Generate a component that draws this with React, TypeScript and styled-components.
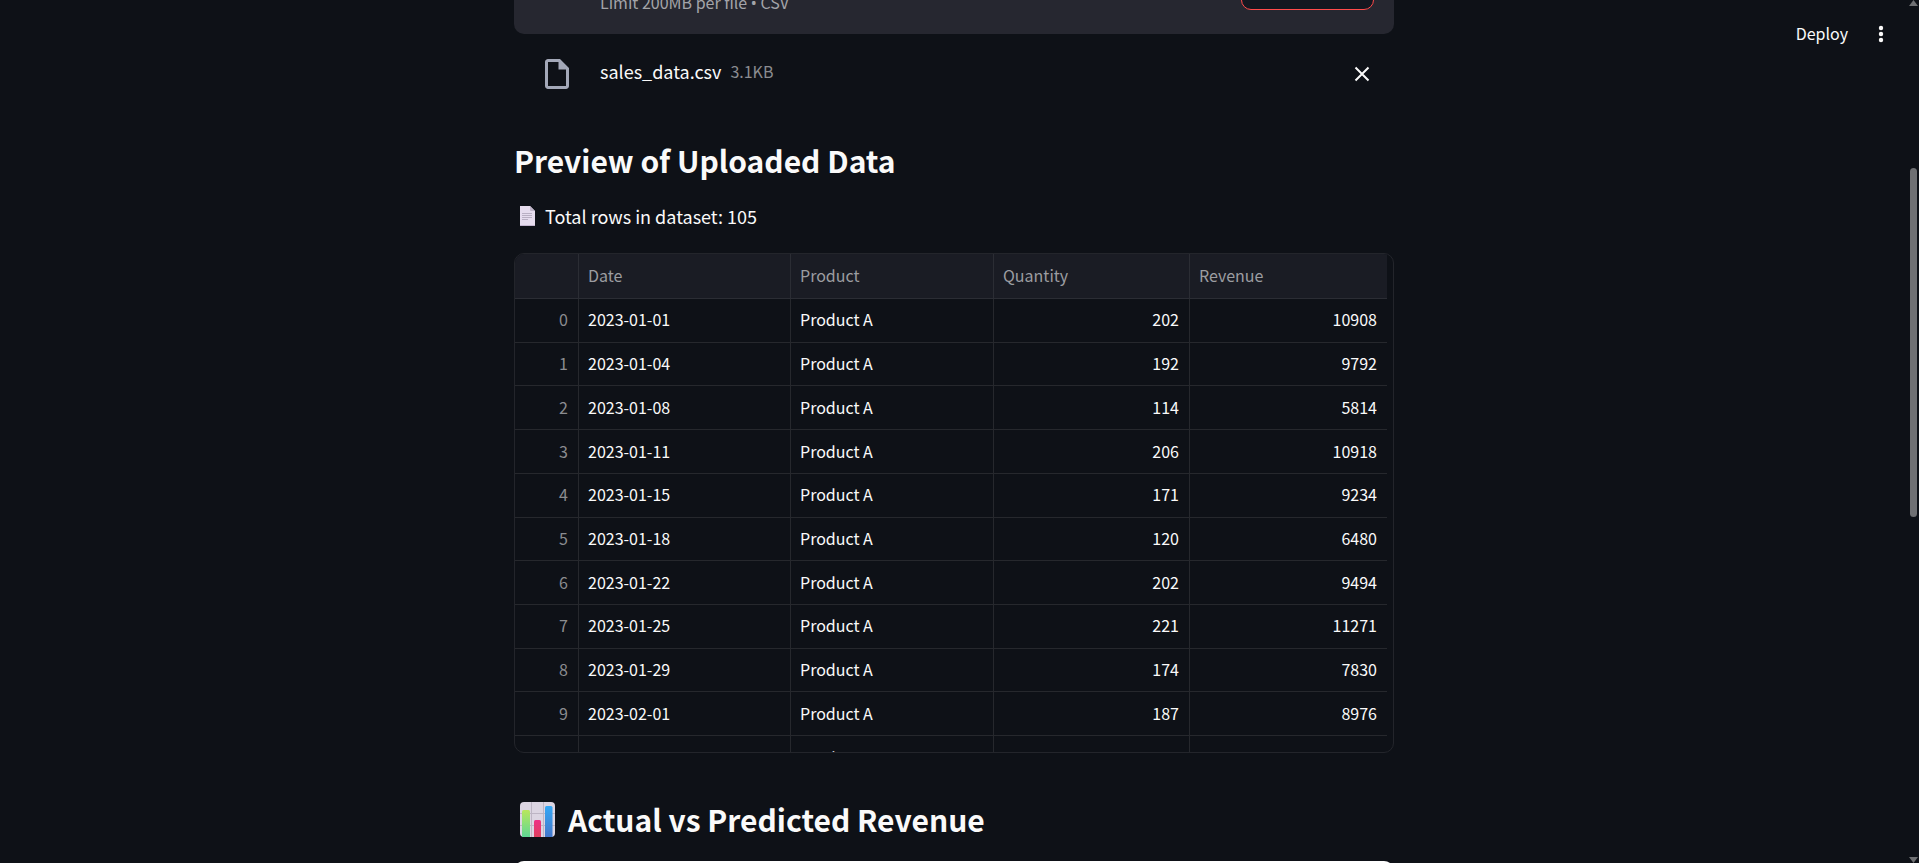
import React from "react";
import styled, { createGlobalStyle, css } from "styled-components";

const GlobalStyle = createGlobalStyle`
  *, *::before, *::after { box-sizing: border-box; }
  body {
    margin: 0;
    background: #0e1117;
    color: #fafafa;
    font-family: "Noto Sans CJK SC", "Noto Sans", sans-serif;
    font-size: 18px;
    line-height: 28px;
  }
`;

const Shell = styled.div`
  position: relative;
  display: flex;
  height: 100vh;
  overflow: hidden;
`;

const Main = styled.main`
  flex: 1;
  min-width: 0;
  overflow: hidden;
`;

const Block = styled.div`
  width: 100%;
  max-width: 880px;
  margin: 0 auto;
`;

const Uploader = styled.section`
  display: flex;
  align-items: flex-end;
  justify-content: space-between;
  height: 34px;
  padding: 0 20px 0 86px;
  overflow: hidden;
  border-radius: 0 0 10px 10px;
  background: #262730;
`;

const UploadHint = styled.small`
  padding-bottom: 19px;
  font-size: 16px;
  line-height: 24px;
  color: #a3a4a9;
`;

const Bullet = styled.span`
  font-family: "Noto Sans", sans-serif;
`;

const BrowseButton = styled.button`
  width: 133px;
  height: 50px;
  margin-bottom: 24px;
  border: 1px solid #ff4b4b;
  border-radius: 10px;
  background: #131720;
`;

const FileRow = styled.div`
  display: flex;
  align-items: center;
  height: 80px;
  padding: 0 20px 0 25px;
`;

const FileIcon = styled.svg`
  width: 36px;
  height: 36px;
  margin-right: 25px;
  fill: #a3a8b8;
`;

const FileLabel = styled.div`
  display: flex;
  flex: 1;
  gap: 9px;
  padding-bottom: 6px;
`;

const FileSize = styled.small`
  font-size: 16px;
  color: #8b8c90;
`;

const IconButton = styled.button`
  display: flex;
  align-items: center;
  justify-content: center;
  width: 25px;
  height: 25px;
  padding: 0;
  border: 0;
  background: none;
  color: #fafafa;
`;

const Heading = styled.h2<{ $icon?: boolean }>`
  display: flex;
  align-items: center;
  gap: 13px;
  margin: 0;
  padding: 24px 0 20px ${(p) => (p.$icon ? "6px" : "0")};
  font-size: 30px;
  font-weight: 600;
  line-height: 44px;
`;

const RowCount = styled.p`
  display: flex;
  align-items: center;
  gap: 10px;
  margin: 0 0 23px;
  padding-left: 6px;
`;

const TableFrame = styled.div`
  height: 500px;
  margin-bottom: 20px;
  overflow: hidden;
  padding-right: 6px;
  border: 1px solid #23252b;
  border-radius: 10px;
`;

const Table = styled.table`
  width: 100%;
  height: 526px;
  table-layout: fixed;
  border-collapse: separate;
  border-spacing: 0;
  font-size: 16px;
  line-height: 24px;
`;

const cell = css`
  height: 43px;
  padding: 0 10px 2px 9px;
  border-right: 1px solid #26282d;
  border-bottom: 1px solid #26282d;
  font-weight: 400;
  &:last-child { border-right: 0; }
`;

const HeadCell = styled.th<{ $width?: number }>`
  ${cell}
  width: ${(p) => (p.$width ? `${p.$width}px` : "auto")};
  height: 45px;
  border-color: #2b2d34;
  background: #1a1c24;
  color: #9c9da1;
  text-align: left;
`;

const IndexCell = styled.th`
  ${cell}
  color: #8b8c90;
  text-align: right;
`;

const Cell = styled.td<{ $numeric?: boolean }>`
  ${cell}
  text-align: ${(p) => (p.$numeric ? "right" : "left")};
`;

const ChartCard = styled.div`
  height: 500px;
  border-radius: 10px;
  background: #ffffff;
`;

const Toolbar = styled.header`
  position: absolute;
  top: 16px;
  right: 26px;
  display: flex;
  align-items: center;
  gap: 20px;
`;

const DeployButton = styled.button`
  height: 36px;
  padding: 0 0 2px;
  border: 0;
  background: none;
  color: #fafafa;
  font: 400 16px/24px "Noto Sans CJK SC", "Noto Sans", sans-serif;
`;

const ScrollTrack = styled.div`
  display: flex;
  flex-direction: column;
  align-items: center;
  width: 11px;
  height: 100%;
`;

const ScrollArrow = styled.svg`
  flex: none;
  width: 9px;
  height: 6px;
  fill: #6f7073;
`;

const ScrollSpace = styled.div<{ $grow: number }>`
  flex: ${(p) => p.$grow} 1 0;
`;

const ScrollThumb = styled.div`
  flex: 349 1 0;
  width: 7px;
  border-radius: 4px;
  background: #6f7073;
`;

const PageEmoji = () => (
  <svg width="15" height="20" viewBox="0 0 15 20" aria-hidden="true">
    <path d="M0 0h10l5 5v15H0z" fill="#e6dcee" />
    <path d="M10 0l5 5h-4a1 1 0 0 1-1-1z" fill="#bfb5c9" />
    <path d="M2 7.5h10M2 9.5h10M2 11.5h10M2 13.5h6" stroke="#b9afc3" strokeWidth="1" />
    <path d="M0 19.5h15" stroke="#c3b5cf" />
  </svg>
);

const ChartEmoji = () => (
  <svg width="35" height="35" viewBox="0 0 35 35" aria-hidden="true">
    <defs>
      <linearGradient id="green" x2="0" y2="1">
        <stop stopColor="#b9e75c" />
        <stop offset="1" stopColor="#5fd895" />
      </linearGradient>
      <linearGradient id="pink" x2="0" y2="1">
        <stop stopColor="#ee2f86" />
        <stop offset="1" stopColor="#e0405f" />
      </linearGradient>
      <linearGradient id="blue" x2="0" y2="1">
        <stop stopColor="#35a8f5" />
        <stop offset="1" stopColor="#4377cb" />
      </linearGradient>
    </defs>
    <rect width="35" height="35" rx="4" fill="#dcd5e2" />
    <path d="M0 11.5h35M0 23.5h35M11.5 0v35M23.5 0v35" stroke="#bdb5c4" />
    <path d="M2 35V9.5a1.5 1.5 0 0 1 1.5-1.5h5a1.5 1.5 0 0 1 1.5 1.5V35z" fill="url(#green)" />
    <path d="M14 35V19.5a1.5 1.5 0 0 1 1.5-1.5h4a1.5 1.5 0 0 1 1.5 1.5V35z" fill="url(#pink)" />
    <path d="M25 35V5.5a1.5 1.5 0 0 1 1.5-1.5h4.5a1.5 1.5 0 0 1 1.5 1.5V35z" fill="url(#blue)" />
  </svg>
);

const rows: [string, string, number, number][] = [
  ["2023-01-01", "Product A", 202, 10908],
  ["2023-01-04", "Product A", 192, 9792],
  ["2023-01-08", "Product A", 114, 5814],
  ["2023-01-11", "Product A", 206, 10918],
  ["2023-01-15", "Product A", 171, 9234],
  ["2023-01-18", "Product A", 120, 6480],
  ["2023-01-22", "Product A", 202, 9494],
  ["2023-01-25", "Product A", 221, 11271],
  ["2023-01-29", "Product A", 174, 7830],
  ["2023-02-01", "Product A", 187, 8976],
];

export default function App() {
  return (
    <>
      <GlobalStyle />
      <Shell>
        <Main>
          <Block>
            <Uploader>
              <UploadHint>
                Limit 200MB per file <Bullet>•</Bullet> CSV
              </UploadHint>
              <BrowseButton aria-label="Browse files" />
            </Uploader>
            <FileRow>
              <FileIcon viewBox="0 0 24 24" aria-hidden="true">
                <path d="M14 2H6c-1.1 0-2 .9-2 2v16c0 1.1.9 2 2 2h12c1.1 0 2-.9 2-2V8l-6-6zM6 20V4h7v5h5v11H6z" />
              </FileIcon>
              <FileLabel>
                <span>sales_data.csv</span>
                <FileSize>3.1KB</FileSize>
              </FileLabel>
              <IconButton aria-label="Remove sales_data.csv">
                <svg width="16" height="16" viewBox="0 0 16 16" stroke="currentColor" strokeWidth="2" aria-hidden="true">
                  <path d="M1.5 1.5l13 13M14.5 1.5l-13 13" />
                </svg>
              </IconButton>
            </FileRow>
            <Heading>Preview of Uploaded Data</Heading>
            <RowCount>
              <PageEmoji />
              Total rows in dataset: 105
            </RowCount>
            <TableFrame>
              <Table>
                <thead>
                  <tr>
                    <HeadCell $width={64} aria-label="Row" />
                    <HeadCell $width={212}>Date</HeadCell>
                    <HeadCell $width={203}>Product</HeadCell>
                    <HeadCell $width={196}>Quantity</HeadCell>
                    <HeadCell>Revenue</HeadCell>
                  </tr>
                </thead>
                <tbody>
                  {rows.map(([date, product, quantity, revenue], i) => (
                    <tr key={date}>
                      <IndexCell scope="row">{i}</IndexCell>
                      <Cell>{date}</Cell>
                      <Cell>{product}</Cell>
                      <Cell $numeric>{quantity}</Cell>
                      <Cell $numeric>{revenue}</Cell>
                    </tr>
                  ))}
                  <tr>
                    <IndexCell scope="row" />
                    <Cell />
                    <Cell>Product A</Cell>
                    <Cell />
                    <Cell />
                  </tr>
                </tbody>
              </Table>
            </TableFrame>
            <Heading $icon>
              <ChartEmoji />
              Actual vs Predicted Revenue
            </Heading>
            <ChartCard />
          </Block>
        </Main>
        <ScrollTrack aria-hidden="true">
          <ScrollArrow viewBox="0 0 9 6"><path d="M4.5 0L9 6H0z" /></ScrollArrow>
          <ScrollSpace $grow={162} />
          <ScrollThumb />
          <ScrollSpace $grow={340} />
          <ScrollArrow viewBox="0 0 9 6"><path d="M4.5 6L9 0H0z" /></ScrollArrow>
        </ScrollTrack>
        <Toolbar>
          <DeployButton>Deploy</DeployButton>
          <IconButton aria-label="Main menu">
            <svg width="6" height="18" viewBox="0 0 6 18" fill="currentColor" aria-hidden="true">
              <circle cx="3" cy="3" r="2.2" />
              <circle cx="3" cy="9" r="2.2" />
              <circle cx="3" cy="15" r="2.2" />
            </svg>
          </IconButton>
        </Toolbar>
      </Shell>
    </>
  );
}
